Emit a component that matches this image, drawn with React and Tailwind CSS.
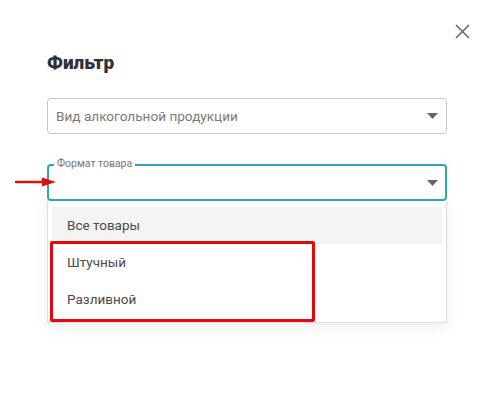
import React from "react";

export default function App() {
  return (
    <div className="relative w-[497px] h-[410px] bg-white overflow-hidden font-['Roboto',sans-serif]">
      {/* close */}
      <button className="absolute left-[454px] top-[23px] w-[16px] h-[16px] flex items-center justify-center">
        <svg width="15" height="15" viewBox="0 0 15 15">
          <path d="M1 1 L14 14 M14 1 L1 14" stroke="#6b6b6b" strokeWidth="1.6" fill="none" />
        </svg>
      </button>

      <div className="flex flex-col pl-[47px] pt-[50px] w-[447px]">
        <h2 className="text-[19px] leading-[26px] font-black text-[#2e3139]">Фильтр</h2>

        <div className="mt-[22px] h-[36px] border border-[#c9c9c9] rounded-[4px] flex items-center justify-between pl-[8px] pr-[8px]">
          <span className="text-[13.6px] text-[#7a7a7a]">Вид алкогольной продукции</span>
          <svg width="11" height="6" viewBox="0 0 11 6">
            <path d="M0 0 H11 L5.5 6 Z" fill="#666" />
          </svg>
        </div>

        <div className="relative mt-[30px] h-[37px] border-2 border-[#2ca7b3] rounded-[4px] flex items-center justify-end pr-[7px]">
          <span className="absolute left-[5px] -top-[8px] bg-white px-[3px] text-[10.5px] leading-[12px] text-[#757575]">
            Формат товара
          </span>
          <svg width="11" height="6" viewBox="0 0 11 6">
            <path d="M0 0 H11 L5.5 6 Z" fill="#666" />
          </svg>
        </div>

        <div className="border border-t-0 border-[#dcdcdc] shadow-[0_4px_14px_rgba(0,0,0,0.08)] pt-[6px] pb-[4px] px-[4px] flex flex-col">
          <div className="h-[37px] bg-[#f4f4f4] flex items-center pl-[15px] text-[13.5px] text-[#4a4a4a]">Все товары</div>
          <div className="h-[37px] flex items-center pl-[15px] text-[13.5px] text-[#4a4a4a]">Штучный</div>
          <div className="h-[37px] flex items-center pl-[15px] text-[13.5px] text-[#4a4a4a]">Разливной</div>
        </div>
      </div>

      {/* annotation: red rectangle */}
      <div className="absolute left-[50px] top-[241px] w-[265px] h-[81px] border-[3px] border-[#e10a0a] rounded-[2px]" />

      {/* annotation: red arrow */}
      <svg className="absolute left-[14px] top-[176px]" width="44" height="12" viewBox="0 0 44 12">
        <path d="M2 6 L30 6" stroke="#e01010" strokeWidth="2.5" strokeLinecap="round" />
        <path d="M28 1.5 L42 6 L28 10.5 Z" fill="#e01010" />
      </svg>
    </div>
  );
}
